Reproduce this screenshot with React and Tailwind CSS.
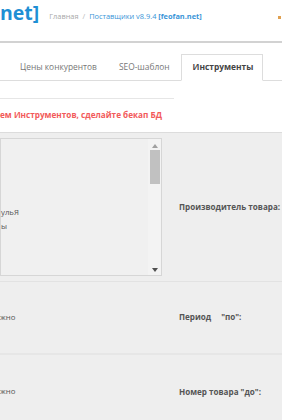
import React from "react";

export default function App() {
  return (
    <div className="w-[282px] h-[420px] overflow-hidden bg-white relative" style={{ fontFamily: '"Open Sans", "Noto Sans", sans-serif' }}>
      {/* header */}
      <div className="h-[41px] flex items-start relative">
        <div className="text-[19.5px] leading-none font-bold text-[#1f8fd4] mt-[3px]">net]</div>
        <div className="ml-[10px] mt-[11px] text-[7.4px] leading-[10px] text-[#a8a8a8] whitespace-nowrap">
          Главная <span className="mx-[2px] text-[#b8b8b8]">/</span>{" "}
          <span className="text-[#3a95d8]">Поставщики v8.9.4 </span>
          <span className="text-[#3a95d8] font-bold">[feofan.net]</span>
        </div>
        <div className="absolute left-[278px] top-[16px] w-[3px] h-[3px] bg-[#e0a050]" />
      </div>
      <div className="h-[2px] bg-[#d2d2d2]" />

      {/* tabs */}
      <div className="pt-[11px] flex pl-[9px] border-b border-[#dddddd] h-[38px]">
        <div className="px-[11px] h-[26px] flex items-center text-[8.4px] text-[#777] whitespace-nowrap">Цены конкурентов</div>
        <div className="px-[11px] h-[26px] flex items-center text-[8.4px] text-[#777] whitespace-nowrap">SEO-шаблон</div>
        <div className="px-[11px] w-[82px] h-[27px] flex items-center text-[8.4px] font-bold text-[#444] whitespace-nowrap bg-white border border-[#dddddd] border-b-white">Инструменты</div>
      </div>

      {/* alert */}
      <div className="mt-[17px] w-[174px] border-t border-[#e6e6e6]" />
      <div className="h-[33px] flex items-center text-[8.2px] font-bold text-[#f25a5a] whitespace-nowrap">
        ем Инструментов, сделайте бекап БД
      </div>

      {/* form */}
      <div className="bg-[#eeeeee] border-t border-[#dcdcdc]">
        <div className="h-[149px] flex items-center border-b border-[#e2e2e2]">
          <div className="w-[179px] shrink-0">
            <div className="w-[162px] h-[138px] border border-[#d6d6d6] bg-[#f0f0f0] flex">
              <div className="flex-1 flex flex-col justify-center text-[7.8px] text-[#555] leading-[14px] pt-[24px]">
                <div>ульЯ</div>
                <div>ы</div>
              </div>
              <div className="w-[13px] flex flex-col items-center pt-[3px] pb-[3px] bg-[#f3f3f3]">
                <svg width="6" height="4" viewBox="0 0 6 4" className="mt-[2px]"><path d="M0 4 L3 0 L6 4Z" fill="#a0a0a0" /></svg>
                <div className="w-[10px] h-[34px] bg-[#c1c1c1] mt-[2px]" />
                <div className="flex-1" />
                <svg width="6" height="4" viewBox="0 0 6 4"><path d="M0 0 L3 4 L6 0Z" fill="#505050" /></svg>
              </div>
            </div>
          </div>
          <div className="text-[8.1px] font-bold text-[#555] whitespace-nowrap">Производитель товара:</div>
        </div>
        <div className="h-[73px] flex items-center border-b-2 border-[#e6e6e6]">
          <div className="w-[179px] shrink-0 text-[7.8px] text-[#555]">жно</div>
          <div className="text-[8.1px] font-bold text-[#555] whitespace-nowrap">Период<span className="inline-block w-[10px]" />"по":</div>
        </div>
        <div className="h-[80px] flex items-start pt-[31px]">
          <div className="w-[179px] shrink-0 text-[7.8px] text-[#555]">жно</div>
          <div className="text-[8.1px] font-bold text-[#555] whitespace-nowrap">Номер товара "до":</div>
        </div>
      </div>
    </div>
  );
}
